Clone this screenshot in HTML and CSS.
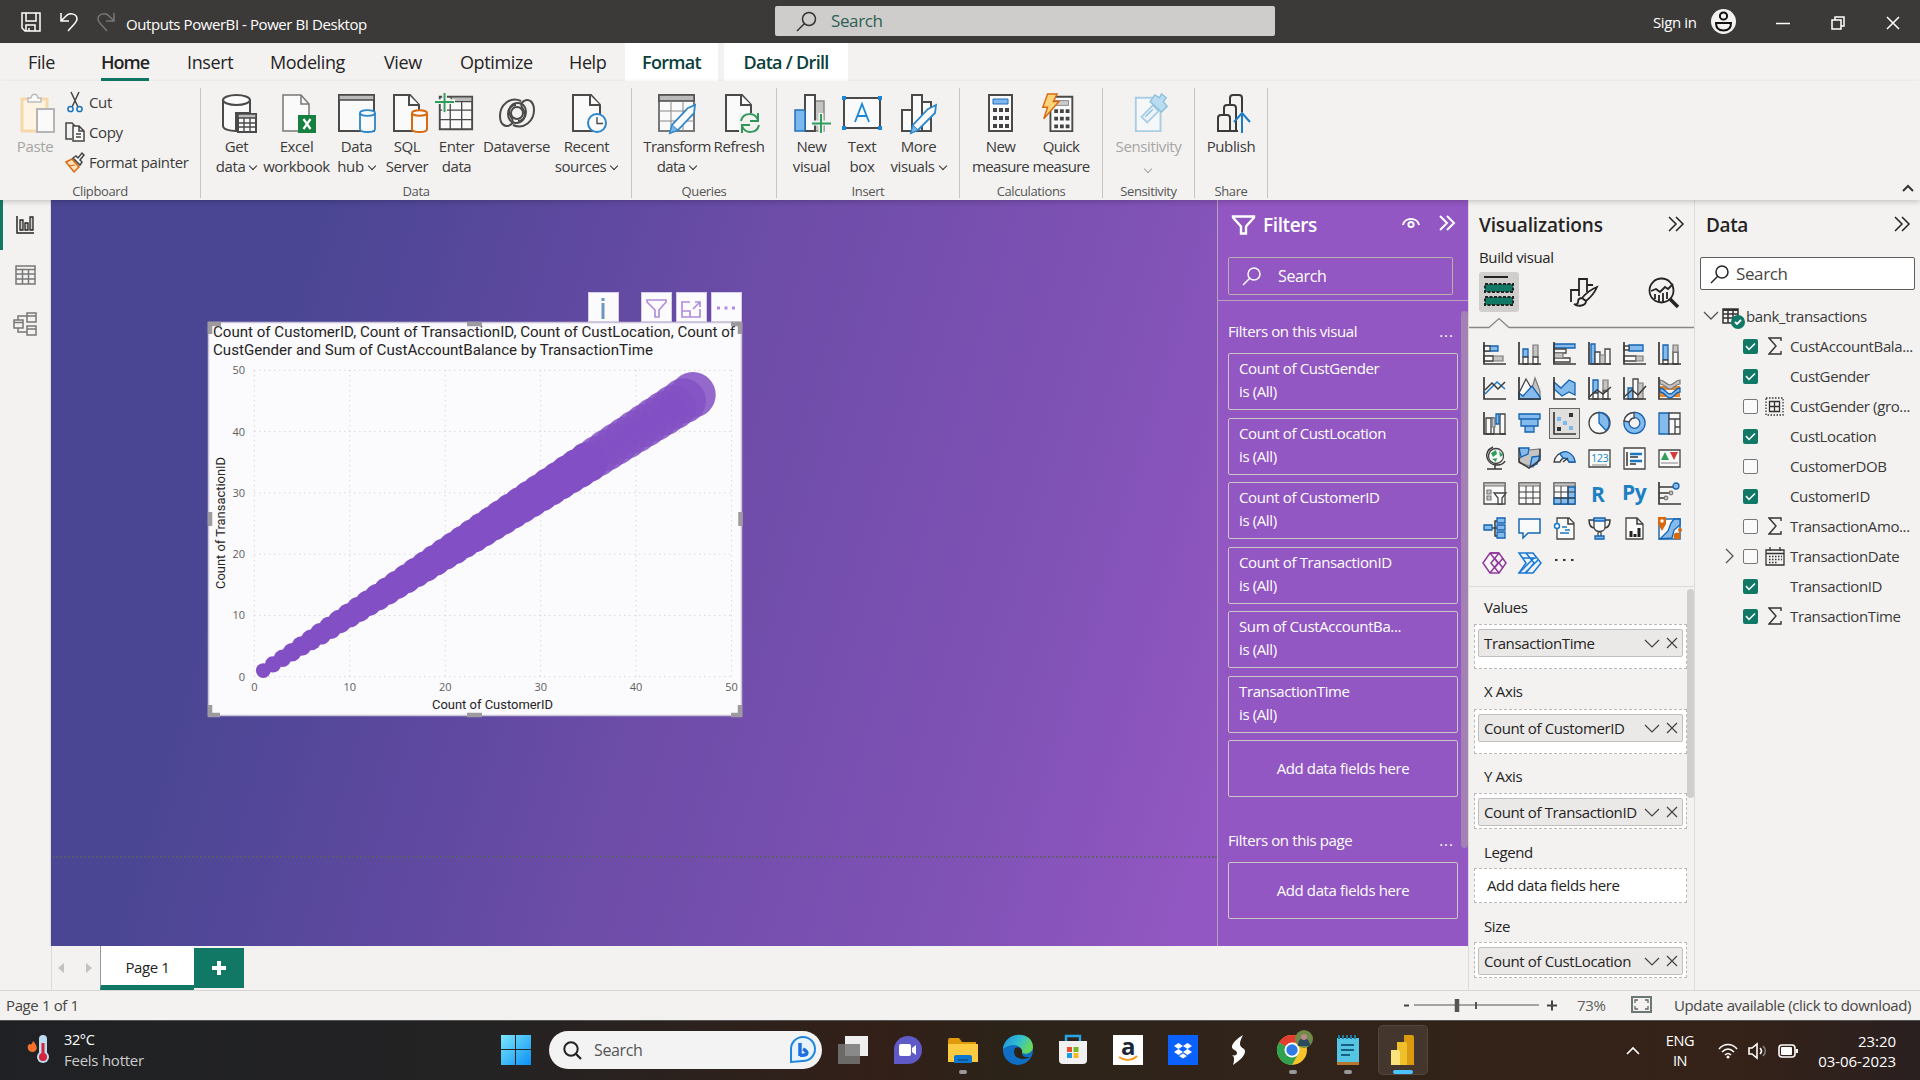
FILE: index.html
```html
<!DOCTYPE html>
<html lang="en">
<head>
<meta charset="utf-8">
<title>Outputs PowerBI - Power BI Desktop</title>
<link rel="stylesheet" href="styles.css">
</head>
<body>
<header class="titlebar">
  <div class="quick">
    <svg width="20" height="20" viewBox="0 0 20 20"><path d="M1 1h18v18H4l-3-3zM5 1v8h10V1M5 19v-6h9v6M8 19v-3"/></svg>
    <svg width="18" height="20" viewBox="0 0 18 20"><path d="M1 1v8h8M1 9l5-5c4-4 11-2 11 3 0 3-2 4-9 12"/></svg>
    <svg class="dim" width="18" height="20" viewBox="0 0 18 20"><path d="M17 1v8H9M17 9l-5-5C8 0 1 2 1 7c0 3 2 4 9 12"/></svg>
  </div>
  <span class="apptitle">Outputs PowerBI - Power BI Desktop</span>
  <div class="topsearch"><svg width="21" height="21" viewBox="0 0 21 21"><circle cx="13" cy="8" r="6.5"/><path d="M8.500 12.500L1 20"/></svg><span>Search</span></div>
  <div class="winctl">
    <span class="signin">Sign in</span>
    <svg class="avatar" width="25" height="25" viewBox="0 0 25 25"><circle cx="12.500" cy="12.500" r="12.500" fill="#f3f2f1"/><g fill="none" stroke="#111" stroke-width="2"><circle cx="12.500" cy="7" r="3.600"/><path d="M5 14h15c0 5-3 7.500-7.500 7.500S5 19 5 14z"/></g></svg>
    <svg width="14" height="14" viewBox="0 0 14 14"><path d="M0 7.500h14"/></svg>
    <svg width="14" height="14" viewBox="0 0 14 14"><path d="M1 4h9v9H1zM4 4V1h9v9h-3"/></svg>
    <svg width="14" height="14" viewBox="0 0 14 14"><path d="M1 1l12 12M13 1L1 13"/></svg>
  </div>
</header>

<nav class="tabs">
  <span class="tab t-file">File</span><span class="tab t-home">Home</span><span class="tab t-insert">Insert</span><span class="tab t-model">Modeling</span><span class="tab t-view">View</span><span class="tab t-opt">Optimize</span><span class="tab t-help">Help</span>
  <span class="tab ctx c-format">Format</span><span class="tab ctx c-drill">Data / Drill</span>
</nav>

<section class="ribbon">
  <div class="group g-clip">
    <div class="clip">
      <div class="btn off"><svg class="r3" width="36" height="40" viewBox="0 0 36 40"><path d="M2 6h25v32H2z" fill="#fdf4e3" stroke="#f5d9ab" stroke-width="3"/><path d="M8 9V5h3c1-5 6-5 7 0h3v4z" fill="#fafafa" stroke="#bdbdbd" stroke-width="1.500"/><path d="M17 16h17v23H17z" fill="#fafafa" stroke="#b5b5b5" stroke-width="2"/></svg><span>Paste</span></div>
      <div class="clips">
        <div><svg width="20" height="22" viewBox="0 0 20 22"><path d="M6 1l7 15M14 1L7 16" stroke="#444" fill="none" stroke-width="1.500"/><circle cx="5.500" cy="18" r="2.600" fill="none" stroke="#1976bc" stroke-width="1.500"/><circle cx="14.500" cy="18" r="2.600" fill="none" stroke="#1976bc" stroke-width="1.500"/></svg>Cut</div>
        <div><svg width="20" height="22" viewBox="0 0 20 22"><path d="M7 18H1V2h6l3 3" fill="none" stroke="#444" stroke-width="1.500"/><path d="M8 5h6l5 5v10H8zM14 5v5h5M11 13h5M11 16h5" fill="#fafafa" stroke="#444" stroke-width="1.500"/></svg>Copy</div>
        <div><svg width="20" height="22" viewBox="0 0 20 22"><path d="M1 11l6-3 7 8-5 5z" fill="#fde0b8" stroke="#d8690f" stroke-width="1.500"/><path d="M4 15l6-1" stroke="#d8690f"/><path d="M8 7l3-2 2 2 4-5 2 2-4 5 2 2-2 3z" fill="#fafafa" stroke="#444" stroke-width="1.500"/></svg>Format painter</div>
      </div>
    </div>
    <label>Clipboard</label>
  </div>
  <div class="group g-data">
    <div class="btns">
      <div class="btn"><svg class="r3" width="36" height="40" viewBox="0 0 36 40"><path d="M2 7v26c0 3 6 5 13 5V20h14V7" class="w"/><ellipse cx="15.500" cy="7" rx="13.500" ry="5" class="w"/><path d="M17 21h18v18H17z" class="w"/><path d="M17 21h18v4H17z" fill="#bbb" class="s"/><path d="M17 30h18M17 34h18M23 25v14M29 25v14" class="s"/></svg><span>Get<br>data<i></i></span></div>
      <div class="btn"><svg class="r3" width="36" height="40" viewBox="0 0 36 40"><path d="M2 2h18l8 9v27H2z" fill="#fafafa" stroke="#777" stroke-width="1.500"/><path d="M20 2v9h8" fill="none" stroke="#777" stroke-width="1.500"/><path d="M17 22h18v18H17z" fill="#15803f"/><path d="M22.500 26l7 10M29.500 26l-7 10" stroke="#fff" stroke-width="2.200"/></svg><span>Excel<br>workbook</span></div>
      <div class="btn"><svg width="40" height="40" viewBox="0 0 40 40"><path d="M2 2h35v36H2z" class="w"/><path d="M2 2h35v5H2z" fill="#bbb" class="s"/><path d="M23 20v16c0 4 15 4 15 0V20" class="u"/><ellipse cx="30.500" cy="20" rx="7.500" ry="2.800" class="u"/></svg><span>Data<br>hub<i></i></span></div>
      <div class="btn"><svg class="r3" width="36" height="40" viewBox="0 0 36 40"><path d="M2 2h16l9 10v26H2z" class="w"/><path d="M17 2v10h10" class="w"/><path d="M20 20v16c0 4 15 4 15 0V20" class="o"/><ellipse cx="27.500" cy="20" rx="7.500" ry="2.800" class="o"/></svg><span>SQL<br>Server</span></div>
      <div class="btn"><svg class="l2" width="40" height="42" viewBox="0 0 40 42"><path d="M4 4h34v34H4z" class="w"/><path d="M16 4h22v5H16z" fill="#bbb" class="s"/><path d="M4 18h34M4 28h34M15 9v29M27 9v29" class="s"/><path d="M9 0v22M0 9h20" stroke="#f3f2f1" stroke-width="5"/><path d="M9 0v20M-1 9.500h20" stroke="#2f9e5a" stroke-width="2"/></svg><span>Enter<br>data</span></div>
      <div class="btn"><svg width="40" height="40" viewBox="0 0 40 40"><g fill="none" stroke="#4a4a4a" stroke-width="2"><path d="M24 8C13 3 3 12 3 23c0 8 5 12 10 9 4-2 3-5 1-8-5-8 1-14 7-14 5 0 8 4 8 9 0 6-4 9-8 9"/><path d="M16 32c11 5 21-4 21-15 0-8-5-12-10-9-4 2-3 5-1 8 5 8-1 14-7 14-5 0-8-4-8-9 0-6 4-9 8-9"/><ellipse cx="20" cy="20" rx="6" ry="6"/></g></svg><span>Dataverse</span></div>
      <div class="btn"><svg class="r3" width="36" height="40" viewBox="0 0 36 40"><path d="M2 2h18l9 10v26H2z" class="w"/><path d="M19 2v10h10" class="w"/><circle cx="26" cy="30" r="9" fill="#fafafa" stroke="#2b86cc" stroke-width="2"/><path d="M26 24v6.500h6" class="s"/></svg><span>Recent<br>sources<i></i></span></div>
    </div>
    <label>Data</label>
  </div>
  <div class="group g-queries">
    <div class="btns">
      <div class="btn tight"><svg width="40" height="40" viewBox="0 0 40 40"><path d="M2 2h35v36H2z" fill="#fafafa" stroke="#777" stroke-width="2"/><path d="M2 2h35v6H2z" fill="#bbb" class="s"/><path d="M2 18h35M2 28h35M14 8v30M26 8v30" stroke="#888"/><path d="M31 15l7-3-1 8-16 17-8 3 2-8z" class="u"/><path d="M15 32l6 5-8 3z" fill="#7ab6e8" stroke="#2b86cc"/></svg><span>Transform<br>data<i></i></span></div>
      <div class="btn"><svg class="r3" width="36" height="40" viewBox="0 0 36 40"><path d="M2 2h16l9 10v26H2z" class="w"/><path d="M17 2v10h10" class="w"/><path d="M15 20h21v20H15z" fill="#f3f2f1"/><path d="M17 28c2-9 14-9 17-1M34 20v8h-8M35 32c-2 9-14 9-17 1M18 40v-8h8" fill="none" stroke="#32965a" stroke-width="2"/></svg><span>Refresh</span></div>
    </div>
    <label>Queries</label>
  </div>
  <div class="group g-insert">
    <div class="btns">
      <div class="btn"><svg width="38" height="40" viewBox="0 0 38 40"><path d="M22 8h9v30h-9z" fill="#c4c4c4" stroke="#888" stroke-width="1.500"/><path d="M12 2h10v36H12z" class="w"/><path d="M2 17h10v21H2z" fill="#7ab8ef" stroke="#2370b8" stroke-width="1.500"/><path d="M28 20v20M18 30h20" stroke="#f3f2f1" stroke-width="5"/><path d="M28 21v19M19 30.500h19" stroke="#2f9e5a" stroke-width="2"/></svg><span>New<br>visual</span></div>
      <div class="btn"><svg width="40" height="40" viewBox="0 0 40 40"><path d="M2 5h36v30H2z" class="w"/><path d="M0 3h4v4H0zM36 3h4v4h-4zM0 33h4v4H0zM36 33h4v4h-4z" fill="#1986d8"/><path d="M13 29l7-18 7 18M15.500 23h9" fill="none" stroke="#1986d8" stroke-width="1.800"/></svg><span>Text<br>box</span></div>
      <div class="btn"><svg width="38" height="40" viewBox="0 0 38 40"><path d="M22 9h9v29h-9zM12 2h10v36H12zM2 17h10v21H2z" class="w"/><path d="M28 16l8-4-1 8-17 17-7 3 2-8z" class="u"/><path d="M13 32l5 5-7 3z" fill="#7ab6e8" stroke="#2b86cc"/></svg><span>More<br>visuals<i></i></span></div>
    </div>
    <label>Insert</label>
  </div>
  <div class="group g-calc">
    <div class="btns">
      <div class="btn tight"><svg width="28" height="40" viewBox="0 0 28 40"><path d="M2 2h23v36H2z" class="w"/><path d="M6 6h15v5H6z" fill="#7ab8ef" stroke="#2370b8"/><path d="M6 17h16M6 25h16M6 33h16" stroke="#444" stroke-width="4" stroke-dasharray="4 2"/></svg><span>New<br>measure</span></div>
      <div class="btn tight"><svg class="l2" width="34" height="42" viewBox="0 0 34 42"><path d="M8 4h23v36H8z" class="w"/><path d="M12 8h15v5H12z" fill="#ccc" stroke="#888"/><path d="M12 19h16M12 27h16M12 35h16" stroke="#444" stroke-width="4" stroke-dasharray="4 2"/><path d="M5 1h10l-4 8h6L1 27l4-12H0z" fill="#fcd27a" stroke="#d8690f" stroke-width="1.500"/></svg><span>Quick<br>measure</span></div>
    </div>
    <label>Calculations</label>
  </div>
  <div class="group g-sens">
    <div class="btns">
      <div class="btn off"><svg class="r3" width="36" height="42" viewBox="0 0 36 42"><path d="M2 5h26v35H2z" fill="#f5f7f8" stroke="#a9cde3" stroke-width="2"/><path d="M8 25L20 13l6 6-12 12z" fill="#eef5fa" stroke="#a9cde3" stroke-width="2"/><path d="M12 25l8-8M17 9l5-7 5 3 2-4 5 4-3 4 4 5-6 6z" fill="#b9dcf0" stroke="#8fc1de" stroke-width="1.500"/></svg><span>Sensitivity<br><i></i></span></div>
    </div>
    <label>Sensitivity</label>
  </div>
  <div class="group g-share">
    <div class="btns">
      <div class="btn"><svg class="r3" width="34" height="40" viewBox="0 0 34 40"><path d="M14 12V5q0-3 3-3h6q3 0 3 3v14M8 22v-7q0-3 3-3h6q3 0 3 3v23M2 38V25q0-3 3-3h6q3 0 3 3v13zM14 38h8" fill="none" stroke="#3b3a39" stroke-width="2"/><path d="M26 40V22M18 29l8-9 8 9" fill="none" stroke="#1d7cc0" stroke-width="2"/></svg><span>Publish</span></div>
    </div>
    <label>Share</label>
  </div>
  <svg class="collapse" width="12" height="8" viewBox="0 0 12 8"><path d="M1 7l5-5 5 5" fill="none" stroke="#333" stroke-width="2"/></svg>
</section>

<main class="main">
  <div class="left">
    <div class="work">
      <aside class="rail">
        <div class="on"><svg width="18" height="18" viewBox="0 0 18 18"><path d="M1 0v17h17" fill="none" stroke="#252423" stroke-width="1.500"/><path d="M4 14V4h3v10zM9 14V7h3v7zM14 14V1h3v13z" fill="#ccc" stroke="#252423" stroke-width="1.300"/></svg></div>
        <div><svg width="21" height="20" viewBox="0 0 21 20"><path d="M1 1h19v18H1zM1 4.500h19M1 9h19M1 14h19M7.500 4v15M13.500 4v15" fill="none" stroke="#777" stroke-width="1.500"/></svg></div>
        <div><svg width="24" height="24" viewBox="0 0 24 24"><path d="M1 8h9v8H1zM14 1h9v9h-9zM14 14h9v9h-9zM1 10.500h9M14 4h9M14 17h9M5 8V4h9M5 16v4h9" fill="none" stroke="#777" stroke-width="1.500"/></svg></div>
      </aside>
      <section class="canvas">
        <div class="pageline"></div>
        <div class="vhead">
          <div class="vb info"><svg width="31" height="30" viewBox="0 0 31 30"><path d="M15 11v16M15 6v3" stroke="#6d96c0" stroke-width="3"/></svg></div>
          <div class="vb"><svg width="31" height="30" viewBox="0 0 31 30"><path d="M6 8h19v2l-7 8v7h-4v-7l-8-8z"/></svg></div>
          <div class="vb"><svg width="31" height="30" viewBox="0 0 31 30"><path d="M14 10H6v15h18v-8M6 19h8v6M17 17l7-7M19 10h5v5"/></svg></div>
          <div class="vb"><svg width="31" height="30" viewBox="0 0 31 30"><path d="M6 16h3M13.500 16h3M21 16h3" stroke-width="3"/></svg></div>
        </div>
        <svg class="chart" width="536" height="396" viewBox="207 321 536 396">
          <rect x="208.500" y="322.500" width="533" height="393" fill="#fbfafd" stroke="#c9c4d8" stroke-width="1.500"/>
          <g class="grid" id="grid"></g>
          <g id="ticks" class="ticks"></g>
          <g id="dots" fill="#8250c4"></g>
          <text class="ct" x="213" y="337" textLength="522" lengthAdjust="spacingAndGlyphs">Count of CustomerID, Count of TransactionID, Count of CustLocation, Count of</text>
          <text class="ct" x="213" y="355" textLength="440" lengthAdjust="spacingAndGlyphs">CustGender and Sum of CustAccountBalance by TransactionTime</text>
          <text class="ca" x="432" y="709" textLength="121" lengthAdjust="spacingAndGlyphs">Count of CustomerID</text>
          <text class="ca" transform="translate(225 589) rotate(-90)" textLength="132" lengthAdjust="spacingAndGlyphs">Count of TransactionID</text>
          <path d="M210 334v-10h11M731 324h9v10M210 705v10h10M731 715h9v-10M467 324h15M467 715h15M210 512v14M740.500 512v14" fill="none" stroke="#9d9b9f" stroke-width="4.500"/>
        </svg>
      </section>
      <aside class="filters">
        <div class="fhead"><svg width="23" height="20" viewBox="0 0 23 20"><path d="M1 1.500h21v1l-8 9v7H9v-7l-8-9z" fill="none" stroke="#fff" stroke-width="2.400"/></svg><b>Filters</b><svg class="eye" width="18" height="12" viewBox="0 0 18 12"><path d="M1 8c1-8 15-8 16 0" fill="none" stroke="#fff" stroke-width="2"/><circle cx="9" cy="7.500" r="2.600" fill="none" stroke="#fff" stroke-width="2"/></svg><svg width="16" height="16" viewBox="0 0 16 16"><path d="M1 1l7 7-7 7M8 1l7 7-7 7" fill="none" stroke="#fff" stroke-width="2"/></svg></div>
        <div class="fsearch"><svg width="19" height="19" viewBox="0 0 19 19"><circle cx="12" cy="7" r="6" fill="none" stroke="#fff" stroke-width="1.500"/><path d="M8 11l-7 7" stroke="#fff" stroke-width="1.500"/></svg>Search</div>
        <div class="fbody">
          <div class="ftitle">Filters on this visual<em>...</em></div>
          <div class="fcard">Count of CustGender<br>is (All)</div>
          <div class="fcard">Count of CustLocation<br>is (All)</div>
          <div class="fcard">Count of CustomerID<br>is (All)</div>
          <div class="fcard">Count of TransactionID<br>is (All)</div>
          <div class="fcard">Sum of CustAccountBa...<br>is (All)</div>
          <div class="fcard">TransactionTime<br>is (All)</div>
          <div class="fcard add">Add data fields here</div>
          <div class="ftitle second">Filters on this page<em>...</em></div>
          <div class="fcard add">Add data fields here</div>
          <div class="fscroll"></div>
        </div>
      </aside>
    </div>
    <div class="pages">
      <div class="arrows"><svg width="34" height="10" viewBox="0 0 34 10"><path d="M6 0v10L0 5zM28 0v10l6-5z" fill="#c4c2c0"/></svg></div>
      <div class="page">Page 1</div>
      <div class="plus"><svg width="14" height="14" viewBox="0 0 14 14"><path d="M7 0v14M0 7h14" stroke="#fff" stroke-width="4"/></svg></div>
    </div>
  </div>

  <aside class="viz">
    <div class="phead"><b>Visualizations</b><svg width="16" height="16" viewBox="0 0 16 16"><path d="M1 1l7 7-7 7M8 1l7 7-7 7"/></svg></div>
    <div class="build">Build visual</div>
    <div class="modes">
      <div class="sel"><svg width="32" height="34" viewBox="0 0 32 34"><path d="M1 3h24" stroke="#252423" stroke-width="2"/><path d="M2 10h28v8H2zM2 23h28v8H2z" fill="#117865" stroke="#252423" stroke-width="2" stroke-dasharray="3 1.500"/></svg></div>
      <svg width="28" height="30" viewBox="0 0 28 30"><path d="M1 25V13h8M9 19V2h8v13M17 8h6" fill="none" stroke="#252423" stroke-width="1.800"/><path d="M12 21C17 15 22 12 27 10c-2 5-6 10-11 14zM12 21c-3 0-4 2-4 4s-2 3-4 2c4 3 12 2 12-3z" fill="#f3f2f1" stroke="#252423" stroke-width="1.800"/></svg>
      <svg width="31" height="31" viewBox="0 0 31 31"><circle cx="13.500" cy="13.500" r="12" fill="none" stroke="#252423" stroke-width="1.800"/><path d="M3 14l5-2 4 3 5-5 3 2 5-5M7 17v5M11 18v7M15 16v9M19 15v7" fill="none" stroke="#252423" stroke-width="1.800"/><path d="M22 22l8 8" stroke="#252423" stroke-width="3.500"/></svg>
    </div>
    <svg class="caret" width="225" height="12" viewBox="0 0 225 12"><path d="M0 10.500h20l10-9 10 9h185" fill="#f3f2f1" stroke="#8a8886" stroke-width="1.300"/></svg>
    <div class="vgrid">
      <svg><path class="b" d="M1 4h14v5H1z"/><path class="q" d="M1 4h6v5H1z"/><path class="g" d="M1 14h19v5H1z"/><path class="q" d="M1 14h9v5H1z"/><path class="a" d="M1 0v22h22"/></svg>
      <svg><path class="b" d="M5 7h5v8H5z"/><path class="q" d="M5 15h5v7H5z"/><path class="g" d="M15 3h5v12h-5z"/><path class="q" d="M15 15h5v7h-5z"/><path class="a" d="M1 0v22h22"/></svg>
      <svg><path class="b" d="M1 2h21v4H1z"/><path class="q" d="M1 7h12v4H1zM1 16h16v4H1z"/><path class="g" d="M1 11h9v5H1z"/><path class="a" d="M1 0v22h22"/></svg>
      <svg><path class="b" d="M3 2h4v20H3z"/><path class="q" d="M7 10h5v12H7zM17 7h5v15h-5z"/><path class="g" d="M12 13h5v9h-5z"/><path class="a" d="M1 0v22h22"/></svg>
      <svg><path class="b" d="M6 3h14v6H6z"/><path class="q" d="M1 4h5v4H1zM1 14h12v5H1z"/><path class="g" d="M13 14h7v5h-7z"/><path class="a" d="M1 0v22h22"/></svg>
      <svg><path class="b" d="M5 3h5v15H5z"/><path class="q" d="M5 18h5v4H5zM15 10h5v12h-5z"/><path class="g" d="M15 3h5v7h-5z"/><path class="a" d="M1 0v22h22"/></svg>

      <svg><path class="l" stroke="#1a78c2" d="M2 17L14 5l8 7"/><path class="l" d="M2 13l7-7 6 6 7-7"/><path class="a" d="M1 0v22h22"/></svg>
      <svg><path class="g" d="M11 22L17 1l5 13v8z"/><path class="q" d="M1 16L8 2l7 12v8H1z"/><path class="b" d="M1 16l4 3 9-10 8 11v2H1z"/><path class="a" d="M1 0v22h22"/></svg>
      <svg><path class="b" d="M1 5l7 6 8-8 6 3v12l-6-3-7 4-8-7z"/><path class="a" d="M1 0v22h22"/></svg>
      <svg><path class="b" d="M5 3h5v13H5z"/><path class="g" d="M15 3h5v10h-5z"/><path class="q" d="M5 16h5v6H5zM15 14h5v8h-5z"/><path class="l" d="M1 20l8-7 6 4 8-7"/><path class="a" d="M1 0v22h22"/></svg>
      <svg><path class="b" d="M5 11h5v11H5z"/><path class="q" d="M10 2h5v20h-5z"/><path class="g" d="M15 6h5v16h-5z"/><path class="l" d="M1 20l8-7 6 5 8-9"/><path class="a" d="M1 0v22h22"/></svg>
      <svg><path d="M2 11h20M2 18h20" stroke="#e8862c" stroke-width="4" fill="none"/><path class="g" d="M2 3c5 0 6 5 10 5s5-5 10-5v4c-5 0-6 5-10 5S7 7 2 7z"/><path class="b" d="M2 11c5 0 6 6 10 6s5-6 10-6v4c-5 0-6 6-10 6S7 15 2 15z"/><path class="a" d="M1 0v22h22"/></svg>

      <svg><path class="q" d="M3 6h5v16H3zM8 6h3v16H8zM17 2h5v20h-5z"/><path class="g" d="M9 6h3v9H9z"/><path class="b" d="M13 2h3v10h-3z"/><path class="a" d="M1 0v22h22"/></svg>
      <svg><path class="b" d="M1 2h21v5H1zM3 7h17v7H3zM7 14h9v6H7z"/></svg>
      <svg class="picked"><path d="M4 5h4v4H4zM10 9h4v4h-4zM16 14h4v4h-4z" fill="#7ab8ef"/><path d="M16 1h4v4h-4zM4 15h4v4H4z" fill="#333"/><path class="a" d="M1 0v22h22"/></svg>
      <svg><circle class="q" cx="11.500" cy="11" r="10.500"/><path class="b" d="M11 .5a10.500 10.500 0 0 1 7 18L11 11z"/></svg>
      <svg><circle cx="11.500" cy="11" r="8" fill="none" stroke="#1563b0" stroke-width="6.500"/><circle cx="11.500" cy="11" r="8" fill="none" stroke="#85bbec" stroke-width="4"/><path class="q" d="M1 9C2 3 6 1 11 .5V6c-3 0-4 2-5 4z"/></svg>
      <svg><path class="b" d="M1 1h10v21H1z"/><path class="q" d="M11 1h11v6H11zM11 7h6v15h-6zM17 7h5v8h-5zM17 15h5v7h-5z"/></svg>

      <svg><circle class="q" cx="13" cy="9" r="7.500"/><path d="M8 6l5-3 1 4-4 3zM16 4l4 4-3 2zM9 12l5-1-1 4z" fill="#2f9e5a"/><path class="l" d="M10 0C-1 5 4 18 14 18c4 0 7-2 8-4M12 18v4M4 22h15"/></svg>
      <svg><path class="g" d="M1 12l10-9 11-1-1 9-6 9-7-2-6-2z"/><path class="b" d="M1 1h10l-1 6-7 3zM14 10l8-1-3 8-7 3z"/><path class="l" d="M1 1v14l10 6 11-8V2"/></svg>
      <svg><path class="q" d="M1 15C3 2 20 2 22 15h-6c-2-5-7-5-9 0z"/><path class="b" d="M7 7c5-5 14-1 15 8h-6c-1-3-3-4-6-4z"/><path class="l" d="M10 15l5-4"/></svg>
      <svg><path class="q" d="M1 3h21v17H1z"/><text x="3" y="15">123</text><path d="M4 18h15" stroke="#888"/></svg>
      <svg><path class="q" d="M1 1h21v21H1z"/><path d="M4 5v14M7 10h8M7 17h6" stroke="#333" stroke-width="1.500"/><path d="M7 7h12M7 14h12" stroke="#1a78c2" stroke-width="2.500"/></svg>
      <svg><path class="q" d="M1 3h21v17H1z"/><path d="M3 13l4-8 4 8z" fill="#2f9e5a"/><path d="M12 5h8l-4 8z" fill="#d93a3a"/><path d="M3 16h17" stroke="#aaa" stroke-width="1.500"/></svg>

      <svg><path class="q" d="M1 1h21v21H1z"/><path class="g" d="M1 1h21v3H1zM4 8h4v4H4zM4 14h4v4H4z"/><path class="q" d="M11 11h12l-4 5v6h-4v-6z"/></svg>
      <svg><path class="q" d="M1 1h21v21H1z"/><path class="g" d="M1 1h21v3H1z"/><path class="thin" d="M1 10h21M1 16h21M8 4v18M15 4v18"/></svg>
      <svg><path class="q" d="M1 1h21v21H1z"/><path class="g" d="M1 1h21v3H1z"/><path class="b" d="M15 5h7v17h-7zM1 16h21v6H1z"/><path class="thin" d="M1 10h21M1 16h21M8 4v18M15 4v18"/></svg>
      <svg><text class="big" x="3" y="20">R</text></svg>
      <svg><text class="big" x="-1" y="18">Py</text></svg>
      <svg><path class="l" d="M1 5h16M1 11h11M1 16h6"/><circle class="b" cx="18" cy="4" r="3"/><circle class="g" cx="13" cy="11" r="1.800"/><circle class="g" cx="8" cy="16" r="1.800"/><path class="a" d="M1 0v22h22"/></svg>

      <svg><path class="l" d="M8 11h6M14 4h-2v15h3"/><path class="b" d="M1 8h8v5H1zM14 1h8v5h-8zM14 8h8v5h-8zM14 15h8v6h-8z"/></svg>
      <svg><path d="M1 2h21v14H10l-5 5v-5H1z" fill="#fafafa" stroke="#1a6ab0" stroke-width="1.500"/></svg>
      <svg><path class="q" d="M4 1h12l5 5v16H4z"/><path class="l" d="M15 1v6h6"/><circle cx="4" cy="9" r="2.500" fill="#fff" stroke="#1a78c2" stroke-width="1.500"/><path d="M9 10h5M7 16h9M12 13h5" stroke="#1a78c2" stroke-width="1.300"/></svg>
      <svg><path class="l" d="M6 3H1c0 6 2 8 6 8M17 3h5c0 6-2 8-6 8"/><path class="q" d="M6 2h11v8c0 6-11 6-11 0zM10 15h3v5h-3z"/><path class="b" d="M6 1h11v3H6zM7 19h9v3H7z"/></svg>
      <svg><path class="q" d="M3 1h11l6 6v15H3z"/><path class="l" d="M14 1v6h6"/><path d="M8 20v-6M12 20v-3M16 20v-9" stroke="#222" stroke-width="3"/></svg>
      <svg><path d="M1 2h21v20H1z" fill="#fafafa" stroke="#1a6ab0" stroke-width="1.500"/><path class="b" d="M22 2v6l-6 5-2 8-12 1 8-8 3-8 3-4z"/><path d="M0 0h8v7l-4 7-4-7z" fill="#d8690f"/><circle cx="4" cy="4" r="1.700" fill="#fff"/><circle cx="19" cy="19" r="3.500" fill="#d8690f"/><circle cx="22" cy="13" r="2" fill="#d8690f"/></svg>

      <svg><path d="M7 1h9l7 10-7 10H7L0 11z" fill="#fbf4fb" stroke="#8c3a98" stroke-width="1.500"/><path d="M7 1l8 10-8 10M16 1L8 11l8 10M11.500 6l4 5-4 5M7 1h9M16 11l4-5M16 11l4 5" fill="none" stroke="#8c3a98" stroke-width="1.500"/></svg>
      <svg><path d="M1 1h14l8 10-8 10H1l7-10z" fill="#eaf3fc" stroke="#1a78d2" stroke-width="1.500"/><path d="M4 6h14M8 1l8 10L8 21M1 21L16 6M7 21l13-13" fill="none" stroke="#1a78d2" stroke-width="1.500"/></svg>
      <svg><path d="M2 8h2.500M10 8h2.500M18 8h2.500" stroke="#333" stroke-width="2"/></svg>
    </div>
    <div class="wells">
      <h4>Values</h4><div class="well tall"><div class="pill">TransactionTime<u></u></div></div>
      <h4>X Axis</h4><div class="well tall"><div class="pill">Count of CustomerID<u></u></div></div>
      <h4>Y Axis</h4><div class="well"><div class="pill">Count of TransactionID<u></u></div></div>
      <h4 class="near">Legend</h4><div class="well empty">Add data fields here</div>
      <h4 class="near">Size</h4><div class="well"><div class="pill">Count of CustLocation<u></u></div></div>
      <div class="vscroll"></div>
    </div>
  </aside>

  <aside class="data">
    <div class="phead"><b>Data</b><svg width="16" height="16" viewBox="0 0 16 16"><path d="M1 1l7 7-7 7M8 1l7 7-7 7"/></svg></div>
    <div class="dsearch"><svg width="19" height="19" viewBox="0 0 19 19"><circle cx="12" cy="7" r="6"/><path d="M8 11l-7 7"/></svg>Search</div>
    <div class="table"><svg width="43" height="24" viewBox="0 0 43 24"><path d="M1 8l7 7 7-7" fill="none" stroke="#555" stroke-width="1.300"/><path d="M20 5h15v14H20zM20 10h15M20 14h15M25 6v13M30 6v13" fill="none" stroke="#333" stroke-width="1.500"/><path d="M20 6h15" stroke="#333" stroke-width="2"/><circle cx="35" cy="18" r="7" fill="#117865"/><path d="M32 18l2 2 4-4" fill="none" stroke="#fff" stroke-width="1.800"/></svg>bank_transactions</div>
    <div class="fld on sum"><s></s><q></q>CustAccountBala...</div>
    <div class="fld on"><s></s><q></q>CustGender</div>
    <div class="fld grp"><s></s><q><svg width="19" height="19" viewBox="0 0 19 19"><path d="M1 1h17v17H1z" fill="none" stroke="#333" stroke-width="1.300" stroke-dasharray="1.500 1.500"/><path d="M4.500 4.500h10v10h-10zM9.500 4v11M4 9.500h11" fill="none" stroke="#333" stroke-width="1.300"/></svg></q>CustGender (gro...</div>
    <div class="fld on"><s></s><q></q>CustLocation</div>
    <div class="fld"><s></s><q></q>CustomerDOB</div>
    <div class="fld on"><s></s><q></q>CustomerID</div>
    <div class="fld sum"><s></s><q></q>TransactionAmo...</div>
    <div class="fld date"><svg class="ex" width="10" height="16" viewBox="0 0 10 16"><path d="M1 1l7 7-7 7" fill="none" stroke="#555" stroke-width="1.300"/></svg><s></s><q><svg width="20" height="19" viewBox="0 0 20 19"><path d="M1 3h18v15H1zM1 6.500h18M5 0v4M15 0v4" fill="none" stroke="#333" stroke-width="1.300"/><path d="M4 9.500h13M4 12.500h13M4 15.500h9" stroke="#333" stroke-width="1.500" stroke-dasharray="1.500 1.500"/></svg></q>TransactionDate</div>
    <div class="fld on"><s></s><q></q>TransactionID</div>
    <div class="fld on sum"><s></s><q></q>TransactionTime</div>
  </aside>
</main>

<footer class="status">
  <span class="pn">Page 1 of 1</span>
  <svg class="zoom" width="154" height="18" viewBox="0 0 154 18"><path d="M1 9.500h5M144 9.500h10M149 4.500v10" stroke="#444" stroke-width="2"/><path d="M11 9h125" stroke="#555" stroke-width="1.200"/><path d="M54 3v13" stroke="#555" stroke-width="4.500"/><path d="M73 6v7" stroke="#555" stroke-width="2"/></svg>
  <span class="pct">73%</span>
  <svg class="fit" width="21" height="17" viewBox="0 0 21 17"><path d="M1 1h19v15H1z" fill="none" stroke="#6a7875" stroke-width="2"/><path d="M4 7V4h3M14 4h3v3M17 10v3h-3M7 13H4v-3" fill="none" stroke="#666" stroke-width="1.300"/></svg>
  <span class="upd">Update available (click to download)</span>
</footer>

<footer class="taskbar">
  <div class="weather"><svg width="24" height="30" viewBox="0 0 24 30"><path d="M6 7c5 5 5 10 0 11C-1 18 0 10 3 10c1 1 2 0 3-3z" fill="#f4702b"/><rect x="12" y="1" width="8" height="22" rx="4" fill="#bcdcf2"/><circle cx="16" cy="23" r="6" fill="#bcdcf2"/><circle cx="16" cy="23" r="4" fill="#d3243b"/><path d="M16 9v14" stroke="#d3243b" stroke-width="3"/></svg><span>32°C<br><small>Feels hotter</small></span></div>
  <div class="dock">
    <div class="app win"><svg width="30" height="30" viewBox="0 0 30 30"><defs><linearGradient id="wg" x2="1" y2="1"><stop stop-color="#7ce8fb"/><stop offset="1" stop-color="#0a8ff5"/></linearGradient></defs><path d="M0 0h14v14H0zM15 0h15v14H15zM0 15h14v15H0zM15 15h15v15H15z" fill="url(#wg)"/></svg></div>
    <div class="tsearch"><svg width="19" height="19" viewBox="0 0 19 19"><circle cx="8" cy="8" r="6.700" fill="none" stroke="#222" stroke-width="2"/><path d="M13 13l5 5" stroke="#222" stroke-width="2.300"/></svg>Search<svg class="bing" width="26" height="26" viewBox="0 0 26 26"><path d="M1 25V12a12 12 0 1 1 12 12z" fill="#e8f4fd" stroke="#2186dc" stroke-width="2"/><path d="M10 6v13M10 18c8 1 9-3 3-6" fill="none" stroke="#1f6fe0" stroke-width="3.500"/></svg></div>
    <div class="app"><svg width="30" height="30" viewBox="0 0 30 30"><path d="M7 1h23v20H7z" fill="#eee"/><path d="M0 9h22v20H0z" fill="#777" opacity=".85"/></svg></div>
    <div class="app"><svg width="30" height="30" viewBox="0 0 30 30"><path d="M1 29V15A14 14 0 1 1 15 29z" fill="#605ac8"/><rect x="6" y="9" width="12" height="12" rx="2" fill="#fff"/><path d="M19 13l4-3v10l-4-3z" fill="#fff"/></svg></div>
    <div class="app run"><svg width="30" height="30" viewBox="0 0 30 30"><path d="M0 5q0-2 2-2h9l3 4h14v8H0z" fill="#e09a0c"/><path d="M0 9h30v18H0z" fill="#fccb42"/><path d="M6 28v-6q0-2 2-2h14q2 0 2 2v6z" fill="#0b77cf"/><path d="M10 25h10" stroke="#075a9e" stroke-width="2"/></svg></div>
    <div class="app"><svg width="30" height="30" viewBox="0 0 30 30"><defs><linearGradient id="eg" x2="1" y2=".4"><stop stop-color="#1a8ce0"/><stop offset=".6" stop-color="#35c1cc"/><stop offset="1" stop-color="#68d85c"/></linearGradient></defs><circle cx="15" cy="15" r="15" fill="#0f6fc4"/><path d="M0 14C2-5 30-4 30 12c0 6-7 8-11 6 1-7-9-12-19-4z" fill="url(#eg)"/><path d="M12 13c-4 9 6 14 15 9 1 0 1 1 0 2 4-5-7 2-8-6 1-4-3-7-7-5z" fill="#2b2318"/></svg></div>
    <div class="app"><svg width="30" height="30" viewBox="0 0 30 30"><path d="M8 6V1h14v5" fill="none" stroke="#25a5e8" stroke-width="2.400"/><path d="M1 6h28v19q0 4-4 4H5q-4 0-4-4z" fill="#f1f1f1"/><path d="M9 12h5v5H9z" fill="#e8502a"/><path d="M15.500 12h5v5h-5z" fill="#78b82a"/><path d="M9 18h5v5H9z" fill="#1a9be8"/><path d="M15.500 18h5v5h-5z" fill="#f8b820"/></svg></div>
    <div class="app"><svg width="30" height="30" viewBox="0 0 30 30"><path d="M0 0h30v30H0z" fill="#fff"/><text x="8" y="20" font-size="24" font-weight="700" fill="#1c2636">a</text><path d="M6 22c5 4 13 4 18-1" fill="none" stroke="#f79a1c" stroke-width="2"/></svg></div>
    <div class="app"><svg width="30" height="30" viewBox="0 0 30 30"><path d="M0 0h30v30H0z" fill="#0a61fe"/><path d="M10.500 8l4.500 3-4.500 3L6 11zM19.500 8l4.500 3-4.500 3-4.500-3zM10.500 14l4.500 3-4.500 3L6 17zM19.500 14l4.500 3-4.500 3-4.500-3zM15 18.500l4 2.500-4 2.500-4-2.500z" fill="#fff"/></svg></div>
    <div class="app"><svg width="30" height="30" viewBox="0 0 30 30"><path d="M20 0C12 5 9 9 9 12c0 3 5 3 5 6 0 2-2 3-5 2 2 1 3 4 1 10 9-6 12-10 12-14 0-3-5-3-5-7 0-3 1-5 3-9z" fill="#fff"/></svg></div>
    <div class="app run"><svg class="chrome" width="36" height="36" viewBox="0 0 36 36"><circle cx="15" cy="21" r="15" fill="#f6c52b"/><path d="M15 21L2 13.500A15 15 0 0 1 28 13.500H15z" fill="#e23b30"/><path d="M15 21L2 13.500A15 15 0 0 0 15 36l6-11z" fill="#2fa14f"/><circle cx="15" cy="21" r="7.500" fill="#fff"/><circle cx="15" cy="21" r="5.700" fill="#2f7ae5"/><circle cx="27" cy="10" r="9" fill="#708a4a"/><path d="M21 17c0-6 3-8 6-8s6 3 6 8z" fill="#2c4960"/><circle cx="27" cy="8" r="3" fill="#b88"/></svg></div>
    <div class="app run"><svg width="24" height="30" viewBox="0 0 24 30"><path d="M1 3h22v26H1z" fill="#54c5e2"/><path d="M1 27h22v3H1z" fill="#b9772e"/><path d="M2 2h20" stroke="#1d7ba2" stroke-width="4" stroke-dasharray="2 2"/><path d="M5 10h13M5 15h13M5 20h9" stroke="#175e80" stroke-width="2"/></svg></div>
    <div class="app active"><svg width="24" height="30" viewBox="0 0 24 30"><path d="M13 0h8q2 0 2 2v28H13z" fill="#d99a10"/><path d="M6 7h8q2 0 2 2v21H6z" fill="#efc02c"/><path d="M0 15h7q2 0 2 2v13H0z" fill="#fbe37c"/></svg></div>
  </div>
  <div class="tray">
    <svg class="up" width="14" height="9" viewBox="0 0 14 9"><path d="M1 8l6-6 6 6"/></svg>
    <span class="lang">ENG<br>IN</span>
    <svg width="20" height="16" viewBox="0 0 20 16"><path d="M1 6c5-6 13-6 18 0M4 9c4-4 8-4 12 0M7 12c2-2 4-2 6 0"/><circle cx="10" cy="14" r="1.500" fill="#fff" stroke="none"/></svg>
    <svg width="20" height="16" viewBox="0 0 20 16"><path d="M1 5h3l5-4v14l-5-4H1zM12 5c2 2 2 4 0 6"/><path d="M15 3c3 3 3 7 0 10" stroke="#888"/></svg>
    <svg width="20" height="14" viewBox="0 0 20 14"><rect x="1" y="1" width="16" height="12" rx="3"/><rect x="3" y="3" width="11" height="8" rx="1" fill="#fff" stroke="none"/><path d="M19 5v4" stroke-width="2"/></svg>
    <span class="clock">23:20<br>03-06-2023</span>
  </div>
</footer>
<script src="chart.js"></script>
</body>
</html>
```
FILE: styles.css
```css
* { box-sizing: border-box; }
body { margin: 0; width: 1920px; height: 1080px; overflow: hidden; display: flex; flex-direction: column; background: #f3f2f1; color: #252423; font: 15px/20px "Open Sans", "Noto Sans", sans-serif; font-stretch: 92%; letter-spacing: -0.38px; white-space: nowrap; }
svg { display: block; flex: none; overflow: visible; }

.titlebar { height: 43px; flex: none; background: #3b3a38; color: #fff; display: flex; position: relative; }
.titlebar svg { fill: none; stroke: #fff; stroke-width: 1.5; }
.quick { display: flex; gap: 19px; padding: 12px 0 0 21px; width: 126px; }
.quick .dim { stroke: #777; }
.apptitle { width: 649px; padding-top: 14px; letter-spacing: -0.43px; }
.topsearch { width: 500px; height: 30px; margin-top: 6px; background: #cecdcb; border-radius: 2px; display: flex; align-items: center; padding-left: 21px; gap: 14px; color: #2f5f55; font-size: 17px; }
.topsearch svg { stroke: #333; }
.winctl { display: flex; padding-left: 378px; }
.signin { width: 58px; padding-top: 12px; }
.winctl svg { margin: 16px 0 0 41px; }
.winctl .avatar { margin: 9px -1px 0 0; stroke: none; }

.tabs { height: 38px; flex: none; display: flex; font-size: 18px; line-height: 39px; padding-left: 28px; }
.tab { flex: none; }
.t-file { width: 73px; } .t-home { width: 48px; margin-right: 38px; font-weight: 600; border-bottom: 3px solid #117865; letter-spacing: -1px; }
.t-insert { width: 83px; } .t-model { width: 114px; } .t-view { width: 76px; } .t-opt { width: 109px; } .t-help { width: 56px; }
.ctx { background: #fff; text-align: center; color: #0b3f3a; font-weight: 600; letter-spacing: -0.7px; }
.c-format { width: 93px; margin-right: 6px; } .c-drill { width: 124px; }

.ribbon { height: 119px; flex: none; display: flex; position: relative; padding-top: 7px; color: #3b3a39; box-shadow: 0 2px 5px rgba(0,0,0,.18); z-index: 2; background: #f3f2f1; }
.group { height: 110px; border-right: 1px solid #c8c6c4; display: flex; flex-direction: column; align-items: center; justify-content: space-between; }
.group label { font-size: 13px; line-height: 14px; color: #555; }
.btns { display: grid; }
.btn { display: flex; flex-direction: column; align-items: center; text-align: center; padding-top: 5px; }
.btn > span { line-height: 20px; margin-top: 3px; display: block; }
.btn > svg { height: 40px; }
.btn > .r3 { margin-left: 5px; } .btn > .l2 { margin-left: -4px; }
.tight { letter-spacing: -0.65px; }
.btn i { display: inline-block; width: 6px; height: 6px; border: solid #333; border-width: 0 1.8px 1.8px 0; transform: rotate(45deg); margin: 0 1px 3px 5px; }
.btn.off i { border-color: #a6a5a3; margin: 0; }
.off { color: #a6a5a3; }
.w { fill: #fafafa; stroke: #4a4a4a; stroke-width: 2; } .s { stroke: #4a4a4a; stroke-width: 1.4; }
path.s:not([fill]) { fill: none; }
.u { fill: #fafafa; stroke: #2b86cc; stroke-width: 1.8; } .o { fill: #fafafa; stroke: #d8690f; stroke-width: 2; }
.g-clip { width: 201px; } .g-data { width: 431px; } .g-queries { width: 145px; } .g-insert { width: 183px; } .g-calc { width: 143px; } .g-sens { width: 92px; } .g-share { width: 73px; }
.g-data .btns { grid-template-columns: 50px 70px 50px 51px 48px 72px 68px; }
.g-queries .btns { grid-template-columns: 70px 54px; }
.g-insert .btns { grid-template-columns: 50px 51px 62px; }
.g-calc .btns { grid-template-columns: 60px 61px; }
.clip { display: flex; align-self: stretch; padding-left: 15px; }
.clip .btn { width: 40px; }
.clips { padding: 3px 0 0 10px; }
.clips div { display: flex; align-items: center; gap: 4px; height: 30px; }
.clips div:first-child { height: 22px; margin-bottom: 4px; }
.collapse { position: absolute; right: 6px; bottom: 8px; }

.main { height: 790px; flex: none; display: flex; }
.left { width: 1468px; display: flex; flex-direction: column; }
.work { height: 746px; display: flex; }
.rail { width: 51px; border-right: 1px solid #dddbd9; }
.rail div { height: 49px; display: flex; align-items: center; justify-content: center; }
.rail .on { height: 50px; border-left: 3px solid #117865; padding-right: 3px; }
.canvas { width: 1166px; position: relative; background: linear-gradient(106deg, #4b4694 20%, #5f49a0 40%, #6f4da9 56%, #8052b6 80%, #9257c2 97%); }
.pageline { position: absolute; left: 2px; right: 0; top: 656px; border-top: 2px dotted #5c6064; opacity: .75; }
.vhead { position: absolute; left: 537px; top: 92px; display: flex; gap: 4px; }
.vb { width: 31px; height: 30px; background: #fbfafd; border: 1px solid #d5ccea; }
.vb svg { margin: -1px; fill: none; stroke: #b18fdc; stroke-width: 1.7; }
.info { margin-right: 18px; }
.chart { position: absolute; left: 156px; top: 121px; }
.grid { stroke: #c9c7cf; stroke-width: 1; stroke-dasharray: 1 4; }
.ticks { fill: #605e5c; font-size: 11px; letter-spacing: 0; }
.ct { font: 14.500px Roboto, sans-serif; letter-spacing: 0; fill: #252423; } .ca { font: 12.500px Roboto, sans-serif; letter-spacing: 0; fill: #252423; }

.filters { width: 251px; background: #9257c2; color: #fff; border-left: 1px solid #b7a3bd; }
.fhead { display: flex; height: 57px; padding: 15px 11px 0 14px; gap: 9px; }
.fhead b { font-size: 19px; font-weight: 600; width: 130px; margin-left: -1px; }
.fhead .eye { margin: 2px 10px 0 0; }
.fsearch { width: 225px; height: 38px; margin-left: 10px; border: 1px solid #b7b0ac; border-radius: 2px; display: flex; align-items: center; gap: 17px; padding-left: 13px; font-size: 16px; }
.fbody { margin-top: 5px; border-top: 1px solid #b7a3bd; padding: 20px 10px 0; position: relative; height: 445px; }
.ftitle { height: 20px; margin-bottom: 12px; display: flex; justify-content: space-between; padding-right: 4px; }
.ftitle em { font-style: normal; letter-spacing: 1px; }
.ftitle.second { margin: 33px 0 12px; }
.fcard { width: 230px; height: 57px; border: 1px solid #cdc6c6; border-radius: 2px; padding: 3px 10px; line-height: 23px; margin-bottom: 7.500px; }
.fcard.add { text-align: center; line-height: 49px; }
.fscroll { position: absolute; right: 0; top: 10px; width: 7px; height: 537px; background: #a481b5; border-radius: 4px; }

.pages { height: 44px; display: flex; margin-left: 51px; border-left: 1px solid #dddbd9; }
.arrows { width: 48px; padding: 17px 0 0 6px; }
.page { width: 94px; background: #fff; border-left: 1px solid #999; border-bottom: 5px solid #117865; text-align: center; line-height: 43px; }
.plus { width: 50px; height: 40px; margin-top: 2px; background: #117865; display: flex; align-items: center; justify-content: center; }

.phead { height: 48px; display: flex; justify-content: space-between; padding: 15px 10px 0 10px; font-size: 19px; }
.phead b { font-weight: 600; } .phead svg, .dsearch svg { fill: none; stroke: #252423; stroke-width: 1.5; margin-top: 1px; }
.viz { width: 227px; border: 1px solid #dddbd9; border-width: 0 1px; }
.viz b { letter-spacing: -0.15px; }
.build { padding-left: 10px; height: 25px; margin-top: -1px; }
.modes { height: 45px; padding: 0 15px 0 10px; display: flex; justify-content: space-between; }
.modes > svg { margin-top: 5px; }
.modes .sel { width: 40px; height: 40px; background: #d1cfcd; border-radius: 3px; padding: 2px 4px; }
.vgrid { height: 258px; border-bottom: 1px solid #dddbd9; padding: 13px 0 0 14px; display: grid; grid-template-columns: repeat(6, 23px); grid-auto-rows: 23px; gap: 12px; }
.vgrid svg { width: 23px; height: 23px; }
.picked { background: #e1dfdd; outline: 1px solid #666; box-shadow: 0 0 0 3px #e1dfdd; outline-offset: 3px; }
.a { fill: none; stroke: #3b3a39; stroke-width: 1.7; } .l { fill: none; stroke-width: 1.5; } .l:not([stroke]) { stroke: #3b3a39; } .thin { fill: none; stroke: #3b3a39; }
.b { fill: #85bbec; stroke: #1563b0; stroke-width: 1.3; } .q { fill: #fafafa; stroke: #444; stroke-width: 1.3; } .g { fill: #c6c4c2; stroke: #7a7a7a; stroke-width: 1.2; }
.vgrid text { fill: #2388cc; font-size: 11px; letter-spacing: -0.5px; } .vgrid .big { font-size: 21px; font-weight: 700; fill: #1d80c3; }
.wells { position: relative; padding: 0 7px 0 5px; height: 403px; }
.wells h4 { font-weight: 400; font-size: 15px; margin: 0; height: 39.500px; line-height: 20px; padding: 12px 0 0 10px; }
.wells h4:first-child { height: 37px; padding-top: 10px; }
.wells .near { padding-top: 13px; height: 39px; }
.well { width: 213px; height: 36px; border: 1px dashed #bbb9b7; background: #fff; padding: 4px 3px; }
.tall { height: 45px; }
.pill { height: 28px; width: 205px; border: 1px solid #c2c0be; border-radius: 2px; background: #ebe9e8; line-height: 26px; padding-left: 5px; position: relative; }
.pill u { position: absolute; right: 4px; top: 6px; width: 34px; height: 14px; background: url("data:image/svg+xml,%3Csvg xmlns='http://www.w3.org/2000/svg' width='34' height='14' fill='none' stroke='%23444' stroke-width='1.2'%3E%3Cpath d='M1 4l7 7 7-7M23 2l10 10M33 2L23 12'/%3E%3C/svg%3E"); }
.well.empty { padding: 0 0 0 12px; line-height: 32px; height: 35px; }
.vscroll { position: absolute; right: 0; top: 2px; width: 7px; height: 209px; border-radius: 4px; background: #d1cfcd; }

.data { width: 225px; }
.data .phead { height: 57px; padding-left: 11px; }
.dsearch { margin-left: 5px; width: 215px; height: 33px; border: 1px solid #605e5c; border-radius: 2px; background: #fff; display: flex; align-items: center; padding-left: 9px; gap: 7px; font-size: 17px; color: #484644; }
.table { display: flex; align-items: center; height: 30px; margin-top: 11px; padding-left: 8px; color: #3b3a39; }
.fld { height: 30px; display: flex; align-items: center; padding-left: 48px; color: #3b3a39; position: relative; }
.fld s { width: 15px; height: 15px; border: 1px solid #777; border-radius: 2px; background: #fafafa; flex: none; }
.fld.on s { border: 0; background: #117865 url("data:image/svg+xml,%3Csvg xmlns='http://www.w3.org/2000/svg' width='15' height='15' fill='none' stroke='%23fff' stroke-width='1.5'%3E%3Cpath d='M3 7l3 3.500 6-6'/%3E%3C/svg%3E"); }
.fld q { quotes: none; width: 25px; margin-left: 7px; flex: none; height: 19px; }
.sum q { background: 3px 0 no-repeat url("data:image/svg+xml,%3Csvg xmlns='http://www.w3.org/2000/svg' width='14' height='19' fill='none' stroke='%23333' stroke-width='1.4'%3E%3Cpath d='M13 4V1H1l7 8-7 8h12v-3'/%3E%3C/svg%3E"); }
.ex { position: absolute; left: 30px; top: 7px; }

.status { height: 30px; flex: none; border-top: 1px solid #d8d6d4; display: flex; align-items: center; padding: 0 6px 2px; color: #484644; }
.pn { width: 1397px; } .zoom { width: 154px; } .pct { margin-left: 20px; width: 54px; color: #605e5c; } .fit { margin-right: 22px; }

.taskbar { height: 60px; flex: none; border-top: 1px solid #555; color: #fff; display: flex; background: linear-gradient(90deg, #202124 0, #232324 24%, #332018 46%, #2c2318 52%, #30241a 62%, #352218 90%, #2a2020 100%); }
.weather { width: 491px; display: flex; padding: 13px 0 0 27px; gap: 13px; font-size: 14.500px; }
.weather span { line-height: 20px; margin-top: -4px; } .weather small { font-size: 15px; letter-spacing: -0.25px; color: #ccc; }
.dock { display: flex; gap: 5px; padding-top: 4px; width: 1118px; }
.app { width: 50px; height: 50px; display: flex; align-items: center; justify-content: center; position: relative; }
.win { margin-right: 3px; }
.tsearch { width: 273px; height: 38px; margin: 6px 1px 0 0; border-radius: 19px; background: #f3f3f3; color: #555; display: flex; align-items: center; gap: 12px; padding-left: 14px; font-size: 16px; }
.bing { margin-left: auto; margin-right: 6px; }
.chrome { margin: -6px 0 0 4px; }
.run::after, .active::after { content: ""; position: absolute; bottom: 1px; left: 21px; width: 8px; height: 4px; border-radius: 2px; background: #999; }
.active { background: rgba(255,255,255,.09); border: 1px solid rgba(255,255,255,.08); border-radius: 5px; }
.active::after { left: 14px; width: 20px; background: #4cc2ff; bottom: 0; }
.tray { display: flex; align-items: center; font-size: 14.500px; gap: 10px; width: 287px; }
.tray svg { fill: none; stroke: #fff; stroke-width: 1.6; }
.up { margin: 0 14px 0 17px; } .lang { text-align: center; width: 32px; margin-right: 12px; } .clock { text-align: right; flex: 1; font-size: 15px; letter-spacing: -0.05px; line-height: 20px; }
```
FILE: chart.js
```js
// Scatter plot: 0-50 on both axes, bubble area grows with the value.
const NS = "http://www.w3.org/2000/svg";
const px = v => 254.3 + v * 9.546;
const py = v => 676.7 - v * 6.128;

function add(parent, tag, attrs, text) {
  const el = document.createElementNS(NS, tag);
  for (const k in attrs) el.setAttribute(k, attrs[k]);
  if (text !== undefined) el.textContent = text;
  document.getElementById(parent).appendChild(el);
}

for (let v = 0; v <= 50; v += 10) {
  add("grid", "line", { x1: px(v), x2: px(v), y1: py(50), y2: py(0) });
  add("grid", "line", { x1: px(0), x2: px(50), y1: py(v), y2: py(v) });
  add("ticks", "text", { x: px(v), y: 691, "text-anchor": "middle" }, v);
  add("ticks", "text", { x: 245, y: py(v) + 4, "text-anchor": "end" }, v);
}
for (let v = 1; v <= 46; v++) {
  const r = Math.sqrt(55 + (v - 1) / 45 * 465);
  add("dots", "circle", { cx: px(v) - 0.5, cy: py(v), r: r, opacity: v > 35 ? 0.86 : 1 });
}
```
